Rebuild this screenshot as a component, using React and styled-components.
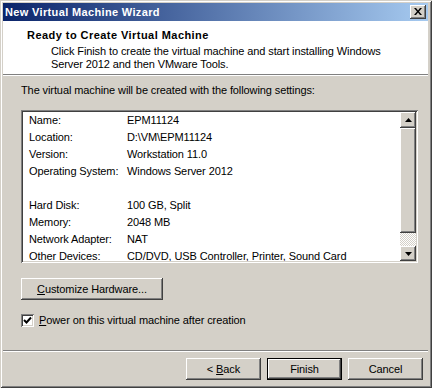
import React from "react";
import styled, { createGlobalStyle } from "styled-components";

const GlobalStyle = createGlobalStyle`
  html, body {
    margin: 0;
    padding: 0;
  }
  body {
    background: #d4d0c8;
    font-family: "Liberation Sans", Arial, sans-serif;
    font-size: 11px;
    letter-spacing: -0.1px;
    color: #000;
  }
`;

const raised = `
  box-shadow: inset -1px -1px #404040, inset 1px 1px #fff,
    inset -2px -2px #808080, inset 2px 2px #d4d0c8;
`;

const sunken = `
  box-shadow: inset 1px 1px #808080, inset -1px -1px #fff,
    inset 2px 2px #404040, inset -2px -2px #d4d0c8;
`;

const Window = styled.div`
  width: 432px;
  height: 388px;
  box-sizing: border-box;
  padding: 3px 4px 4px 3px;
  background: #d4d0c8;
  display: flex;
  flex-direction: column;
  box-shadow: inset 1px 1px #d4d0c8, inset -1px -1px #404040,
    inset 2px 2px #fff, inset -2px -2px #808080;
`;

const TitleBar = styled.div`
  height: 18px;
  display: flex;
  align-items: center;
  justify-content: space-between;
  padding: 0 2px;
  background: linear-gradient(to right, #0a246a, #a6caf0);
`;

const Title = styled.span`
  color: #fff;
  font-weight: bold;
  letter-spacing: 0.35px;
  line-height: 13px;
`;

const CloseButton = styled.div`
  width: 16px;
  height: 14px;
  box-sizing: border-box;
  background: #d4d0c8;
  display: flex;
  align-items: center;
  justify-content: center;
  padding: 0 1px 1px 0;
  ${raised}
`;

const Header = styled.div`
  height: 53px;
  box-sizing: border-box;
  background: #fff;
  padding: 8px 0 0 24px;
`;

const HeaderTitle = styled.div`
  font-weight: bold;
  letter-spacing: 0.45px;
  line-height: 13px;
`;

const HeaderText = styled.div`
  margin: 3px 0 0 24px;
  line-height: 13px;
`;

const Divider = styled.div`
  height: 0;
  border-top: 1px solid #808080;
  border-bottom: 1px solid #fff;
`;

const Body = styled.div`
  flex: 1;
  padding: 0 0 0 18px;
  display: flex;
  flex-direction: column;
  align-items: flex-start;
`;

const Intro = styled.div`
  margin-top: 8px;
  line-height: 13px;
`;

const ListBox = styled.div`
  margin-top: 13px;
  width: 397px;
  height: 153px;
  box-sizing: border-box;
  padding: 2px;
  background: #fff;
  display: flex;
  ${sunken}
`;

const ListContent = styled.div`
  flex: 1;
  overflow: hidden;
  padding-left: 6px;
`;

const Row = styled.div`
  display: flex;
  height: 17px;
  line-height: 17px;
  white-space: nowrap;
`;

const Label = styled.span`
  width: 98px;
  flex: none;
`;

const ScrollBar = styled.div`
  width: 16px;
  display: flex;
  flex-direction: column;
`;

const ScrollButton = styled.div`
  height: ${(p) => p.$h}px;
  background: #d4d0c8;
  display: flex;
  align-items: center;
  justify-content: center;
  ${raised}
`;

const Track = styled.div`
  flex: 1;
  background: repeating-conic-gradient(#d4d0c8 0 25%, #fff 0 50%) 0 0 / 2px 2px;
`;

const Button = styled.button`
  width: ${(p) => p.$w}px;
  height: 22px;
  box-sizing: border-box;
  border: none;
  padding: 0;
  margin: 0;
  background: #d4d0c8;
  font-family: "Liberation Sans", Arial, sans-serif;
  font-size: 11px;
  letter-spacing: -0.1px;
  color: #000;
  ${(p) =>
    p.$default
      ? `box-shadow: inset 0 0 0 1px #000, inset -2px -2px #404040, inset 2px 2px #fff,
    inset -3px -3px #808080, inset 3px 3px #d4d0c8;`
      : raised}
`;

const CustomizeButton = styled(Button)`
  margin-top: 15px;
`;

const CheckRow = styled.label`
  margin-top: 14px;
  display: flex;
  align-items: center;
  gap: 5px;
  line-height: 13px;
`;

const CheckBox = styled.span`
  width: 13px;
  height: 13px;
  box-sizing: border-box;
  background: #fff;
  display: flex;
  align-items: center;
  justify-content: center;
  ${sunken}
`;

const Footer = styled.div`
  display: flex;
  justify-content: flex-end;
  gap: 6px;
  padding: 6px 5px 4px 0;
`;

const settings = [
  ["Name:", "EPM11124"],
  ["Location:", "D:\\VM\\EPM11124"],
  ["Version:", "Workstation 11.0"],
  ["Operating System:", "Windows Server 2012"],
  ["", ""],
  ["Hard Disk:", "100 GB, Split"],
  ["Memory:", "2048 MB"],
  ["Network Adapter:", "NAT"],
  ["Other Devices:", "CD/DVD, USB Controller, Printer, Sound Card"],
];

const Arrow = ({ down }) => (
  <svg width="7" height="4" viewBox="0 0 7 4">
    <polygon points={down ? "0,0 7,0 3.5,4" : "0,4 7,4 3.5,0"} fill="#000" />
  </svg>
);

export default function App() {
  return (
    <>
      <GlobalStyle />
      <Window>
        <TitleBar>
          <Title>New Virtual Machine Wizard</Title>
          <CloseButton>
            <svg width="8" height="7" viewBox="0 0 8 7">
              <path d="M0 0h2l2 2.4L6 0h2L5 3.5 8 7H6L4 4.6 2 7H0l3-3.5z" fill="#000" />
            </svg>
          </CloseButton>
        </TitleBar>
        <Header>
          <HeaderTitle>Ready to Create Virtual Machine</HeaderTitle>
          <HeaderText>
            Click Finish to create the virtual machine and start installing Windows
            <br />
            Server 2012 and then VMware Tools.
          </HeaderText>
        </Header>
        <Divider />
        <Body>
          <Intro>The virtual machine will be created with the following settings:</Intro>
          <ListBox>
            <ListContent>
              {settings.map(([label, value], i) => (
                <Row key={i}>
                  <Label>{label}</Label>
                  <span>{value}</span>
                </Row>
              ))}
            </ListContent>
            <ScrollBar>
              <ScrollButton $h={16}>
                <Arrow />
              </ScrollButton>
              <ScrollButton $h={105} />
              <Track />
              <ScrollButton $h={15}>
                <Arrow down />
              </ScrollButton>
            </ScrollBar>
          </ListBox>
          <CustomizeButton $w={142}>
            <u>C</u>ustomize Hardware...
          </CustomizeButton>
          <CheckRow>
            <CheckBox>
              <svg width="9" height="9" viewBox="0 0 9 9">
                <polyline points="1,4 3.5,6.5 8,1.5" fill="none" stroke="#000" strokeWidth="2" />
              </svg>
            </CheckBox>
            <span>
              <u>P</u>ower on this virtual machine after creation
            </span>
          </CheckRow>
        </Body>
        <Divider />
        <Footer>
          <Button $w={75}>
            &lt; <u>B</u>ack
          </Button>
          <Button $w={75} $default>
            Finish
          </Button>
          <Button $w={75}>Cancel</Button>
        </Footer>
      </Window>
    </>
  );
}
